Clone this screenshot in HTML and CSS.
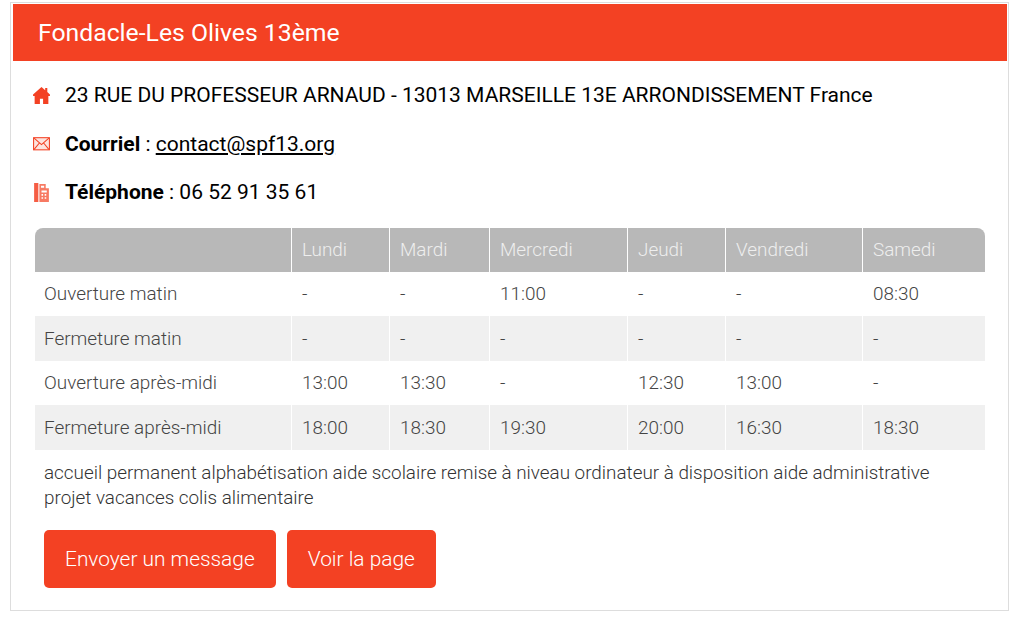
FILE: index.html
```html
<!DOCTYPE html>
<html lang="fr">
<head>
  <meta charset="UTF-8" />
  <title>Fondacle-Les Olives 13ème</title>
  <link rel="stylesheet" href="styles.css">
</head>
<body>
  <div class="card">
    <h2 class="card-title">Fondacle-Les Olives 13ème</h2>
    <div class="contact">
      <div class="contact-line">
        <svg class="icon" viewBox="0 0 16 18"><path fill="#f34123" d="M8 1 0 8v1.500h1.500V17h5v-5h3v5h5V9.500H16V8l-2.500-2.200V2h-2v2z"/></svg>
        <span>23 RUE DU PROFESSEUR ARNAUD - 13013 MARSEILLE 13E ARRONDISSEMENT France</span>
      </div>
      <div class="contact-line">
        <svg class="icon" viewBox="0 0 16 18"><rect x=".5" y="3.500" width="15" height="11.500" fill="#fde4df" stroke="#f34123"/><path fill="none" stroke="#f34123" d="M1 4l7 6 7-6M1 14.500l5-6M15 14.500l-5-6"/></svg>
        <span><b>Courriel</b> : <a href="#">contact@spf13.org</a></span>
      </div>
      <div class="contact-line">
        <svg class="icon" viewBox="0 0 16 18"><path fill="#f34123" d="M1 0h4v18H1z" opacity=".85"/><path fill="#f77a63" d="M6 1h6v4h3v13H6z"/><path fill="#fff" d="M7.500 2.500h3v2h-3zM8 7h5v2H8zM8 10.500h1.500V12H8zM11 10.500h1.500V12H11zM8 13.500h1.500V15H8zM11 13.500h1.500V15H11z"/></svg>
        <span><b>Téléphone</b> : 06 52 91 35 61</span>
      </div>
    </div>
    <table class="hours">
      <colgroup>
        <col class="col-label"><col class="col-a"><col class="col-b"><col class="col-c"><col class="col-a"><col class="col-e"><col class="col-d">
      </colgroup>
      <thead>
        <tr><th></th><th>Lundi</th><th>Mardi</th><th>Mercredi</th><th>Jeudi</th><th>Vendredi</th><th>Samedi</th></tr>
      </thead>
      <tbody>
        <tr><td>Ouverture matin</td><td>-</td><td>-</td><td>11:00</td><td>-</td><td>-</td><td>08:30</td></tr>
        <tr><td>Fermeture matin</td><td>-</td><td>-</td><td>-</td><td>-</td><td>-</td><td>-</td></tr>
        <tr><td>Ouverture après-midi</td><td>13:00</td><td>13:30</td><td>-</td><td>12:30</td><td>13:00</td><td>-</td></tr>
        <tr><td>Fermeture après-midi</td><td>18:00</td><td>18:30</td><td>19:30</td><td>20:00</td><td>16:30</td><td>18:30</td></tr>
      </tbody>
    </table>
    <p class="services">accueil permanent alphabétisation aide scolaire remise à niveau ordinateur à disposition aide administrative projet vacances colis alimentaire</p>
    <div class="actions">
      <a class="btn" href="#">Envoyer un message</a>
      <a class="btn" href="#">Voir la page</a>
    </div>
  </div>
</body>
</html>
```

FILE: styles.css
```css
body {
  margin: 0;
  padding: 2px 15px 0 10px;
  background: #fff;
  font-family: Roboto, sans-serif;
  color: #000;
}

.card {
  border: 1px solid #ddd;
  padding: 1px 1px 21px 2px;
  height: 585px;
}

.card-title {
  margin: 0;
  background: #f34123;
  color: #fff;
  font-size: 24.750px;
  font-weight: 400;
  line-height: 57px;
  padding-left: 25px;
}

.contact {
  padding: 10px 0 0 20px;
}

.contact-line {
  display: flex;
  align-items: center;
  height: 48.500px;
  font-size: 21px;
}

.contact-line a {
  color: #000;
}

.contact-line b {
  font-weight: 700;
}

.icon {
  width: 17px;
  height: 19px;
  margin-right: 15px;
}

.hours {
  border-collapse: separate;
  border-spacing: 0;
  table-layout: fixed;
  width: 950px;
  margin: 11px 0 0 22px;
  font-size: 18.900px;
  color: #444;
}

.col-label { width: 256px; }
.col-a { width: 98px; }
.col-b { width: 100px; }
.col-c { width: 138px; }
.col-e { width: 137px; }
.col-d { width: 123px; }

.hours th {
  background: #b8b8b8;
  color: #eee;
  font-weight: 300;
  text-align: left;
  height: 44px;
  padding: 0 0 0 10px;
  border-left: 1px solid #fff;
}

.hours th:first-child {
  border-left: 0;
  border-top-left-radius: 8px;
}

.hours th:last-child {
  border-top-right-radius: 8px;
}

.hours td {
  height: 44.500px;
  padding: 0 0 0 10px;
  border-left: 1px solid #fff;
  font-weight: 300;
}

.hours td:first-child {
  border-left: 0;
  padding-left: 9px;
}

.hours tbody tr:nth-child(even) td {
  background: #f0f0f0;
}

.services {
  margin: 10px 40px 0 31px;
  font-size: 18.870px;
  line-height: 25px;
  font-weight: 300;
  color: #333;
}

.actions {
  display: flex;
  gap: 11px;
  margin: 20px 0 0 31px;
}

.btn {
  background: #f34123;
  color: #fff;
  font-size: 20.900px;
  font-weight: 300;
  line-height: 58px;
  padding: 0 21px;
  border-radius: 5px;
  text-decoration: none;
}
```
